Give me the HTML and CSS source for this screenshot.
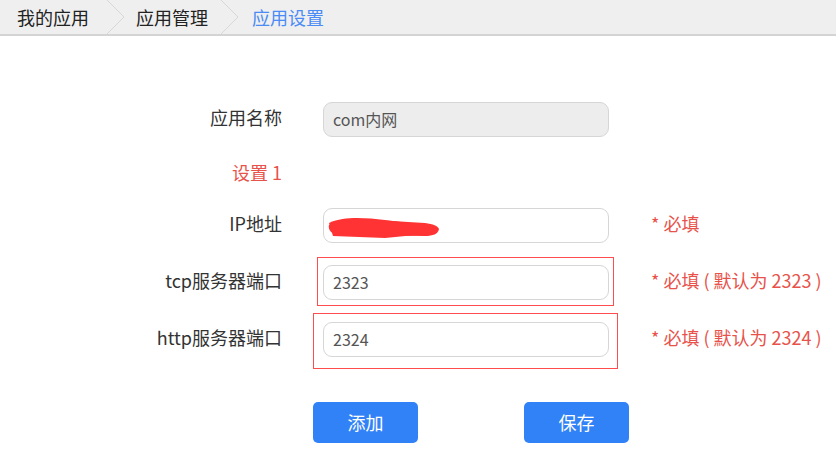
FILE: index.html
```html
<!DOCTYPE html>
<html lang="zh-CN">
<head>
<meta charset="utf-8">
<title>应用设置</title>
<link rel="stylesheet" href="styles.css">
</head>
<body>
<nav class="crumbs">
  <span class="crumb">我的应用</span>
  <svg class="sep sep-first" width="20" height="34" viewBox="0 0 20 34"><path d="M1 0 L18 17 L1 34" fill="none" stroke="#d8d8d8" stroke-width="1"/></svg>
  <span class="crumb">应用管理</span>
  <svg class="sep sep-second" width="20" height="34" viewBox="0 0 20 34"><path d="M1 0 L18 17 L1 34" fill="none" stroke="#d8d8d8" stroke-width="1"/></svg>
  <span class="crumb active">应用设置</span>
</nav>

<main class="form">
  <div class="row">
    <label class="label">应用名称</label>
    <div class="field"><div class="input disabled">com内网</div></div>
  </div>
  <div class="row section">
    <span class="label red">设置 1</span>
  </div>
  <div class="row">
    <label class="label">IP地址</label>
    <div class="field">
      <div class="input"></div>
      <svg class="scribble" width="120" height="30" viewBox="0 0 120 30"><path d="M8 11 C30 8 60 9 100 12 C108 13 113 15 114 18 C113 23 108 25 100 25 C70 25 40 24 10 23 C5 22 3 17 4 14 Z" fill="#ff3333"/><path d="M4 12 C20 5 40 7 60 9 L100 14 L111 22 L60 27 L8 25 Z" fill="#ff3333"/></svg>
    </div>
    <span class="hint">* 必填</span>
  </div>
  <div class="row">
    <label class="label">tcp服务器端口</label>
    <div class="field">
      <div class="input">2323</div>
      <span class="mark mark-a"></span>
    </div>
    <span class="hint">* 必填 ( 默认为 2323 )</span>
  </div>
  <div class="row">
    <label class="label">http服务器端口</label>
    <div class="field">
      <div class="input">2324</div>
      <span class="mark mark-b"></span>
    </div>
    <span class="hint">* 必填 ( 默认为 2324 )</span>
  </div>
  <div class="actions">
    <button class="btn">添加</button>
    <button class="btn">保存</button>
  </div>
</main>
</body>
</html>
```

FILE: styles.css
```css
* { box-sizing: border-box; }
body {
  margin: 0;
  background: #fff;
  font-family: "Noto Sans CJK SC", "Noto Sans", sans-serif;
  color: #333;
}
.crumbs {
  display: flex;
  align-items: center;
  height: 36px;
  background: #efefef;
  border-bottom: 2px solid #d4d4d4;
  padding-left: 17px;
}
.crumb {
  font-size: 18px;
  line-height: 32px;
  color: #222;
}
.crumb.active { color: #4a8bf5; }
.sep { display: block; }
.sep-first { margin: 0 10px 0 17px; }
.sep-second { margin: 0 12px 0 12px; }
.form {
  padding-top: 66px;
  display: flex;
  flex-direction: column;
  gap: 22px;
}
.row {
  display: flex;
  align-items: center;
  height: 35px;
}
.row.section { height: 27px; }
.label {
  width: 282px;
  text-align: right;
  font-size: 18px;
  line-height: 24px;
  color: #333;
  margin-right: 41px;
  padding-bottom: 6px;
}
.label.red { color: #e8524a; padding-bottom: 2px; }
.field {
  position: relative;
  width: 286px;
  height: 35px;
}
.input {
  height: 35px;
  border: 1px solid #d6d6d6;
  border-radius: 9px;
  background: #fff;
  padding-left: 9px;
  font-size: 16px;
  line-height: 33px;
  color: #555;
}
.input.disabled { background: #ededed; }
.scribble {
  position: absolute;
  left: 2px;
  top: 3px;
}
.mark {
  position: absolute;
  border: 1px solid #ff4d4d;
}
.mark-a { left: -6px; top: -8px; right: -5px; bottom: -6px; }
.mark-b { left: -10px; top: -9px; right: -9px; bottom: -12px; }
.hint {
  margin-left: 42px;
  font-size: 18px;
  line-height: 24px;
  padding-bottom: 6px;
  color: #e8524a;
  white-space: pre;
}
.actions {
  display: flex;
  gap: 106px;
  padding-left: 313px;
  margin-top: 23px;
}
.btn {
  width: 105px;
  height: 41px;
  border: none;
  border-radius: 5px;
  background: #3182f6;
  color: #fff;
  font-family: inherit;
  font-size: 18px;
  padding-bottom: 3px;
}
```
